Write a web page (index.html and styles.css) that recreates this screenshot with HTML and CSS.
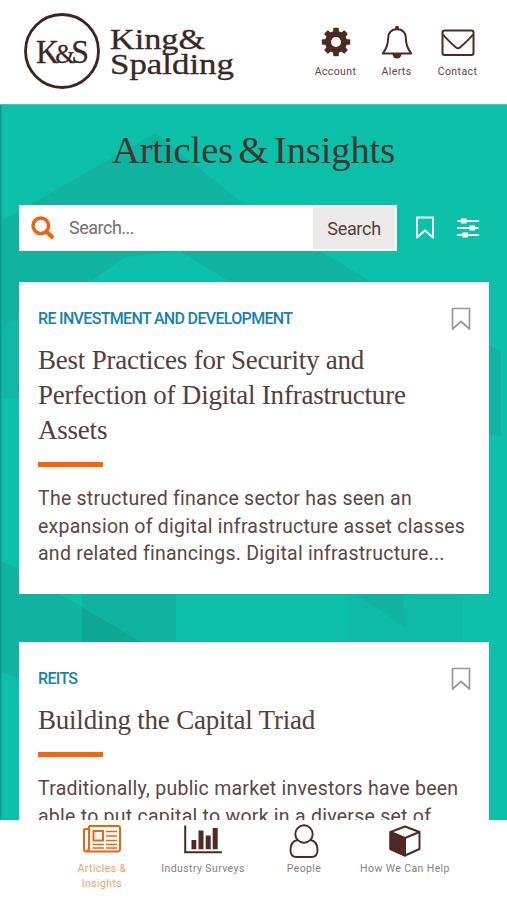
FILE: index.html
```html
<!DOCTYPE html>
<html lang="en">
<head>
    <meta charset="UTF-8">
    <meta name="viewport" content="width=device-width, initial-scale=1.0">
    <title>King &amp; Spalding - Articles &amp; Insights</title>

    <link rel="stylesheet" href="styles.css">
</head>
<body>
  <div class="app">

    <header class="header">
      <svg class="logo" width="220" height="84" viewBox="20 10 220 84">
        <circle cx="62" cy="51" r="36.5" fill="none" stroke="#3a2723" stroke-width="2.8"/>
        <g fill="#3a2723" stroke="#3a2723" stroke-width="0.3">
          <text x="36" y="62.5" font-size="34" textLength="53" lengthAdjust="spacingAndGlyphs">K<tspan font-size="27" dx="-4">&amp;</tspan><tspan dx="-4">S</tspan></text>
          <text x="110" y="48.5" font-size="30" textLength="95" lengthAdjust="spacingAndGlyphs">King&amp;</text>
          <text x="110" y="73.5" font-size="30" textLength="124" lengthAdjust="spacingAndGlyphs">Spalding</text>
        </g>
      </svg>

      <nav class="top-nav">
        <a class="top-link">
          <svg width="30" height="36" viewBox="0 -4 30 36">
            <g fill="#4e2a22">
              <circle cx="15" cy="15" r="11"/>
              <rect x="12.2" y="0.8" width="5.6" height="28.4" rx="1"/>
              <rect x="0.8" y="12.2" width="28.4" height="5.6" rx="1"/>
              <rect x="12.2" y="0.8" width="5.6" height="28.4" rx="1" transform="rotate(45 15 15)"/>
              <rect x="12.2" y="0.8" width="5.6" height="28.4" rx="1" transform="rotate(-45 15 15)"/>
            </g>
            <circle cx="15" cy="15" r="5" fill="#fff"/>
          </svg>
          <span>Account</span>
        </a>
        <a class="top-link">
          <svg width="32" height="36" viewBox="0 -2 32 36">
            <path d="M11.500 29a4.500 4.500 0 0 0 9 0z" fill="#4e2a22"/>
            <circle cx="16" cy="2.800" r="2" fill="#4e2a22"/>
            <path d="M16 4.200c-5.500 0-8.500 3.600-8.800 8.600-.3 6.200-1 9.500-5.400 15.700h28.400c-4.400-6.200-5.100-9.500-5.400-15.700C24.500 7.800 21.500 4.200 16 4.200z" fill="#fff" stroke="#4e2a22" stroke-width="2" stroke-linejoin="round"/>
          </svg>
          <span>Alerts</span>
        </a>
        <a class="top-link">
          <svg width="34" height="36" viewBox="0 -6 34 36">
            <g fill="none" stroke="#4e2a22" stroke-width="2" stroke-linejoin="round">
              <rect x="1.500" y="1.500" width="31" height="24.500" rx="2"/>
              <path d="M2 5.500c4 5 8.500 9 13 13q2 1.500 4 0c4.500-4 9-8 13-13"/>
            </g>
          </svg>
          <span>Contact</span>
        </a>
      </nav>
    </header>

    <main class="content">
      <svg class="shapes" width="507" height="716" viewBox="0 104 507 716">
        <polygon points="155,133 245,205 375,284 375,300 230,282 180,251 125,257 90,282 0,330 0,222" fill="#10b3a0"/>
        <polygon points="0,328 19,318 19,398 0,398" fill="#0fb8a4"/>
        <polygon points="0,561 19,569 60,594 82,607 82,594 176,594 176,644 19,644 19,679 0,671" fill="#10b3a0"/>
        <polygon points="82,607 144,644 82,644" fill="#0ea794"/>
        <path d="M489 346l9 3q3 1 3 4v84l-12-3z" fill="#10b5a2"/>
        <rect x="348" y="594" width="115" height="50" fill="#0ebba6"/>
        <polygon points="355,594 402,594 407,628" fill="#10b3a0"/>
        <rect x="0" y="104" width="1.500" height="716" fill="#0e978b"/>
      </svg>

      <h1 class="page-title">Articles &amp; Insights</h1>

      <div class="search-row">
        <div class="search-box">
          <svg class="search-icon" width="24" height="24" viewBox="0 0 24 24">
            <circle cx="9.800" cy="9.800" r="7.800" fill="none" stroke="#ee640e" stroke-width="3.500"/>
            <path d="M15.500 15.500l5.500 5.500" stroke="#ee640e" stroke-width="4" stroke-linecap="round"/>
          </svg>
          <span class="search-input">Search...</span>
          <button class="search-button">Search</button>
        </div>
        <svg class="saved-icon" width="20" height="24" viewBox="0 0 20 24">
          <path d="M2 1.500h16v20l-8-7-8 7z" fill="none" stroke="#fff" stroke-width="1.900" stroke-linejoin="round"/>
        </svg>
        <svg class="filter-icon" width="22" height="20" viewBox="0 0 22 20">
          <path d="M0 3h22M0 10h22M0 17h22" stroke="#fff" stroke-width="1.900"/>
          <path d="M4 .5h5.500v5H4zM12.500 7.500h5.500v5h-5.500zM5.500 14.500h5.500v5h-5.500z" fill="#fff"/>
        </svg>
      </div>

      <article class="card">
        <div class="card-top">
          <span class="category">RE INVESTMENT AND DEVELOPMENT</span>
          <svg class="bookmark" width="20" height="24" viewBox="0 0 20 24">
            <path d="M1.500 1.500h17v20.500l-8.500-7.500-8.500 7.500z" fill="none" stroke="#999" stroke-width="1.700" stroke-linejoin="round"/>
          </svg>
        </div>
        <h2>Best Practices for Security and Perfection of Digital Infrastructure Assets</h2>
        <div class="rule"></div>
        <p>The structured finance sector has seen an expansion of digital infrastructure asset classes and related financings. Digital infrastructure...</p>
      </article>

      <article class="card">
        <div class="card-top">
          <span class="category">REITS</span>
          <svg class="bookmark" width="20" height="24" viewBox="0 0 20 24">
            <path d="M1.500 1.500h17v20.500l-8.500-7.500-8.500 7.500z" fill="none" stroke="#999" stroke-width="1.700" stroke-linejoin="round"/>
          </svg>
        </div>
        <h2>Building the Capital Triad</h2>
        <div class="rule"></div>
        <p>Traditionally, public market investors have been able to put capital to work in a diverse set of</p>
      </article>
    </main>

    <nav class="tab-bar">
      <a class="tab active">
        <svg width="40" height="32" viewBox="0 0 40 32">
          <g fill="none" stroke="#ee640e" stroke-width="2">
            <path d="M7 3h29q2 0 2 2v21q0 2.500-2.500 2.500H4.500Q2 28.500 2 26V7q0-1 1-1h4"/>
            <path d="M7 3v22q0 3-2.500 3"/>
            <rect x="11.500" y="8" width="9.500" height="9.500"/>
            <path d="M24 8.500h11M24 13h11M24 17.500h11M10.500 21.500H22M24 21.500h11M10.500 25H22M24 25h11" stroke-width="1.500"/>
          </g>
        </svg>
        <span>Articles &amp;<br>Insights</span>
      </a>
      <a class="tab">
        <svg width="40" height="32" viewBox="0 0 40 32">
          <path d="M2.200 2.500v26.800H39" fill="none" stroke="#4e2a22" stroke-width="2"/>
          <path d="M8.500 17h4.800v9.300H8.500zM15.500 7.500h5v18.800h-5zM22.700 12.500h5v13.800h-5zM29.700 5h5v21.300h-5z" fill="#4e2a22"/>
        </svg>
        <span>Industry Surveys</span>
      </a>
      <a class="tab">
        <svg width="32" height="36" viewBox="0 -1 32 36">
          <g fill="#fff" stroke="#4e2a22" stroke-width="1.900">
            <path d="M9.500 16C5 17 2.500 21 2.500 26q0 7 6 7h15q6 0 6-7c0-5-2.500-9-7-10z"/>
            <circle cx="16" cy="10" r="8.700"/>
          </g>
        </svg>
        <span>People</span>
      </a>
      <a class="tab">
        <svg width="34" height="34" viewBox="0 -1 34 34">
          <g stroke="#4e2a22" stroke-width="2" stroke-linejoin="round">
            <path d="M17 2.500L31.500 8v17L17 31.500 2.500 25V8z" fill="#fff"/>
            <path d="M2.500 8L17 14v17.500L2.500 25z" fill="#4e2a22"/>
            <path d="M17 14l14.500-6" fill="none"/>
          </g>
        </svg>
        <span>How We Can Help</span>
      </a>
    </nav>

  </div>
</body>
</html>
```

FILE: styles.css
```css
* {
box-sizing: border-box;
}

body {
margin: 0;
background: #fff;
font-family: Roboto, "Liberation Sans", Arial, sans-serif;
color: #5b4742;
}

.app {
width: 507px;
height: 900px;
overflow: hidden;
display: flex;
flex-direction: column;
}

.header {
height: 104px;
flex: none;
display: flex;
padding: 10px 0 0 20px;
background: #fff;
}

.logo {
font-family: "Liberation Serif", "Times New Roman", serif;
}

.top-nav {
display: flex;
padding-left: 65px;
}

.top-link {
width: 61px;
display: flex;
flex-direction: column;
align-items: center;
justify-content: space-between;
height: 68px;
padding-top: 13px;
font-size: 10.5px;
letter-spacing: 0.4px;
white-space: nowrap;
}

.content {
flex: 1;
min-height: 0;
overflow: hidden;
position: relative;
background: #0dc0aa;
padding: 0 19px;
border-top: 1px solid #35cbb8;
}

.shapes {
position: absolute;
top: -1px;
left: 0;
}

.page-title {
position: relative;
margin: 0;
padding-top: 22px;
height: 100px;
text-align: center;
font: 38.5px/46px "Liberation Serif", "Times New Roman", serif;
word-spacing: -4px;
letter-spacing: -0.1px;
color: #42362f;
}

.search-row {
position: relative;
display: flex;
align-items: center;
height: 46px;
margin-bottom: 31px;
}

.search-box {
width: 378px;
height: 46px;
background: #fff;
display: flex;
align-items: center;
padding: 2px 2px 2px 12px;
}

.search-input {
flex: 1;
padding: 0 0 2px 14px;
font-size: 18px;
letter-spacing: -0.5px;
color: #77706d;
}

.search-button {
width: 82px;
height: 42px;
border: 0;
background: #eceae9;
font: 18px Roboto, "Liberation Sans", sans-serif;
letter-spacing: -0.3px;
color: #54403b;
}

.saved-icon {
margin-left: 18px;
}

.filter-icon {
margin-left: 22px;
}

.card {
position: relative;
width: 470px;
height: 312px;
margin-bottom: 48px;
padding: 25px 18px 0 19px;
background: #fff;
}

.card-top {
display: flex;
justify-content: space-between;
height: 24px;
}

.category {
font-size: 16px;
font-weight: 500;
line-height: 24px;
letter-spacing: -0.67px;
color: #1782ad;
white-space: nowrap;
}

.card h2 {
margin: 12px 0 0;
font: 27px/35px "Liberation Serif", "Times New Roman", serif;
letter-spacing: -0.22px;
color: #54403b;
}

.rule {
width: 65px;
height: 5px;
margin-top: 14px;
background: #f2660d;
}

.card p {
margin: 18px -10px 0 0;
font-size: 19.5px;
line-height: 27.5px;
letter-spacing: 0.25px;
}

.tab-bar {
height: 80px;
flex: none;
display: flex;
justify-content: center;
background: #fff;
}

.tab {
width: 101px;
display: flex;
flex-direction: column;
align-items: center;
padding-top: 3px;
font-size: 10.5px;
line-height: 15px;
letter-spacing: 0.4px;
text-align: center;
white-space: nowrap;
color: #8d807d;
}

.tab span {
margin-top: auto;
height: 39px;
}

.tab.active {
color: #f5a06a;
}
```
